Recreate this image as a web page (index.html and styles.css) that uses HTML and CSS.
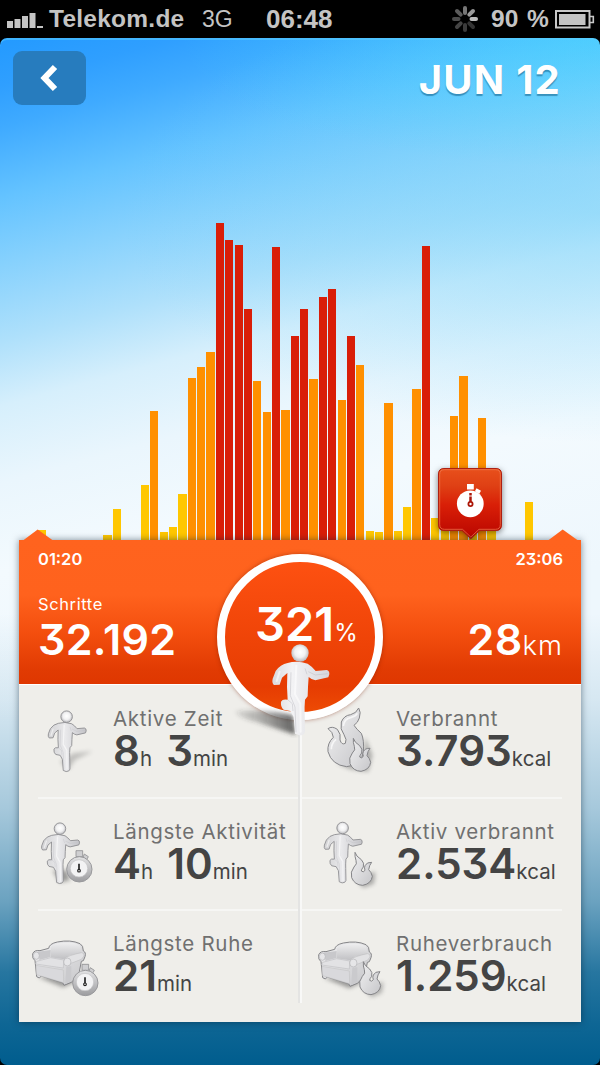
FILE: index.html
```
<!DOCTYPE html>
<html lang="de">
<head>
<meta charset="utf-8">
<title>Jun 12</title>
<link rel="stylesheet" href="styles.css">
</head>
<body>
<svg class="defs" width="0" height="0" aria-hidden="true">
  <defs>
    <linearGradient id="metal" x1="0" y1="0" x2="1" y2="1"><stop offset="0" stop-color="#f1f1f2"/><stop offset=".5" stop-color="#dcdcde"/><stop offset="1" stop-color="#c6c6c9"/></linearGradient>
    <linearGradient id="white3d" x1="0" y1="0" x2="1" y2="0"><stop offset="0" stop-color="#d9d9dd"/><stop offset=".35" stop-color="#f3f3f5"/><stop offset=".6" stop-color="#e8e8eb"/><stop offset="1" stop-color="#d6d6dc"/></linearGradient>
    <linearGradient id="body3d" x1="0" y1="0" x2="1" y2="0"><stop offset="0" stop-color="#d2d2d4"/><stop offset=".45" stop-color="#e9e9eb"/><stop offset="1" stop-color="#c4c4c8"/></linearGradient>
    <linearGradient id="cast" x1="0" y1="0" x2="1" y2="0"><stop offset="0" stop-color="#333" stop-opacity=".12"/><stop offset=".5" stop-color="#333" stop-opacity=".4"/><stop offset="1" stop-color="#333" stop-opacity=".75"/></linearGradient>
    <radialGradient id="ball" cx=".5" cy=".45" r=".55"><stop offset="0" stop-color="#fff"/><stop offset=".55" stop-color="#f1f1f2"/><stop offset="1" stop-color="#b9b9bd"/></radialGradient>
    <linearGradient id="rim" x1="0" y1="0" x2="0" y2="1"><stop offset="0" stop-color="#e4e4e5"/><stop offset="1" stop-color="#9c9c9f"/></linearGradient>
    <linearGradient id="cushion" x1="0" y1="0" x2="0" y2="1"><stop offset="0" stop-color="#efeff0"/><stop offset="1" stop-color="#c0c0c3"/></linearGradient>
    <filter id="soft" x="-50%" y="-50%" width="200%" height="200%"><feGaussianBlur stdDeviation="6"/></filter>
    <symbol id="runner" viewBox="205 305 190 288" overflow="visible">
      <path d="M262 368Q290 359 322 370Q335 378 346 392L379 389Q388 391 387 402L384 411L345 420Q335 419 325 410L323 440L322 468L314 478Q312 500 313 520L314 574Q312 585 297 585L284 580L280 530L270 512L250 508Q240 500 242 484Q246 475 262 478L260 440L261 398L245 412L238 433L221 434Q214 428 217 415L226 392Q240 372 262 368Z"/>
      <path d="M272 396L270 466L284 500L287 576M314 384L320 402M262 478L276 490L278 512M324 394L345 404L382 400" fill="none" stroke="#bcbcc2" stroke-width="2.5" opacity=".6"/>
      <path d="M288 376L284 462L300 490L301 574M238 394L229 422" fill="none" stroke="#fff" stroke-width="6" opacity=".55" stroke-linecap="round"/>
      <circle cx="299" cy="338" r="26" fill="url(#ball)"/>
    </symbol>
    <symbol id="watch" viewBox="136 476 86 102" overflow="visible">
      <path d="M168 481h20v18h-20zM193 491l12 8-5 9-11-7z" fill="#cfcfd1" stroke="#8f8f92" stroke-width="2.5"/>
      <circle cx="178" cy="537" r="38" fill="url(#rim)" stroke="#99999c" stroke-width="3"/>
      <circle cx="177" cy="534" r="26" fill="#f3f3f4" stroke="#c4c4c6" stroke-width="2"/>
      <path d="M177 520v18" stroke="#222" stroke-width="5"/><circle cx="177" cy="541" r="4" fill="#fff" stroke="#222" stroke-width="3.5"/>
    </symbol>
    <symbol id="flame" viewBox="150 484 70 104" overflow="visible">
      <path d="M165 486Q164 500 168 510Q173 521 162 530Q150 545 155 562Q164 584 188 585Q214 580 217 558Q214 545 206 538Q208 524 215 516Q200 515 195 526Q192 532 195 540Q190 548 184 542Q184 537 190 530Q194 518 184 508Q168 498 165 486Z" fill="url(#metal)" stroke="#858588" stroke-width="3" stroke-linejoin="round"/>
    </symbol>
    <symbol id="sofa" viewBox="94 116 166 146" overflow="visible">
      <path d="M112 230L190 262L236 240L214 226Z" fill="#555" opacity=".55" filter="url(#soft)"/>
      <path d="M98 162Q102 149 120 152L146 145Q148 131 172 126Q212 118 240 131Q250 136 250 153Q259 157 255 170L250 182L244 184L236 226L214 247L192 256L188 248L124 228L118 234L110 230L105 182Q96 176 98 162Z" fill="url(#metal)" stroke="#858588" stroke-width="3" stroke-linejoin="round"/>
      <path d="M152 172L153 142Q162 129 184 129Q218 124 238 134Q246 144 243 158L206 167L192 178Z" fill="url(#cushion)"/>
      <path d="M110 184L152 173L191 180L190 204L107 192Z" fill="#e2e2e4" stroke="#c1c1c4" stroke-width="2"/>
      <path d="M108 196L190 210L191 248L110 224Z" fill="#d9d9dc" stroke="#c0c0c0" stroke-width="1.5"/>
      <path d="M102 158Q112 152 124 154L152 150L151 171L118 180Q119 164 102 158Z" fill="#c8c8cb"/>
      <path d="M192 176Q206 166 244 158Q254 158 252 168L244 178L213 190Z" fill="#e2e2e4" stroke="#b8b8bb" stroke-width="1.5"/>
      <ellipse cx="109" cy="167" rx="9" ry="11" fill="#e6e6e8" stroke="#b4b4b7" stroke-width="2"/>
      <ellipse cx="202" cy="186" rx="11" ry="12" fill="#e6e6e8" stroke="#b4b4b7" stroke-width="2"/>
      <path d="M199 201L214 198L214 243L196 252Z" fill="#cacacd"/>
    </symbol>
  </defs>
</svg>

<header class="status">
  <svg class="signal" width="36" height="18" viewBox="0 0 36 18"><path d="M0 11h6v7H0zM7.500 9h6v9h-6zM15 6h6v12h-6zM22.500 3h6v15h-6zM30 16h6v2h-6z" fill="#c4c4c4"/></svg>
  <span class="carrier">Telekom.de</span>
  <span class="network">3G</span>
  <span class="clock">06:48</span>
  <svg class="spinner" width="28" height="28" viewBox="-14 -14 28 28" stroke-width="4" stroke-linecap="round">
    <path d="M0-6V-11" stroke="#777"/><path d="M4.300-4.300L8-8" stroke="#999"/><path d="M6.500 0H11" stroke="#bbb"/><path d="M4.300 4.300L8 8" stroke="#333"/><path d="M0 6V11" stroke="#3c3c3c"/><path d="M-4.300 4.300L-8 8" stroke="#444"/><path d="M-6.500 0H-11" stroke="#4c4c4c"/><path d="M-4.300-4.300L-8-8" stroke="#5c5c5c"/>
  </svg>
  <span class="percent">90 %</span>
  <svg class="battery" width="40" height="19" viewBox="0 0 40 19"><rect x="1" y="1" width="33.500" height="16.500" fill="none" stroke="#c8c8c8" stroke-width="2"/><rect x="4" y="4" width="26.500" height="11" fill="#c4c4c4"/><path d="M35 6.500h3.300v6H35" fill="none" stroke="#c8c8c8" stroke-width="1.600"/></svg>
</header>

<main class="screen">
  <div class="topbar">
    <button class="back" aria-label="Zurück"><svg width="20" height="28" viewBox="0 0 20 28"><path d="M15 3L4.500 14L15 25" fill="none" stroke="#fff" stroke-width="6"/></svg></button>
    <h1 class="date">JUN 12</h1>
  </div>

  <section class="chart">
    <i class="bar none"></i><i class="bar none"></i><i class="bar low" style="height:10px"></i><i class="bar none"></i><i class="bar none"></i><i class="bar none"></i><i class="bar none"></i><i class="bar none"></i><i class="bar none"></i><i class="bar low" style="height:5px"></i>
    <i class="bar low" style="height:31px"></i><i class="bar none"></i><i class="bar none"></i><i class="bar low" style="height:55.500px"></i><i class="bar mid" style="height:128.700px"></i><i class="bar low" style="height:7.700px"></i><i class="bar low" style="height:13px"></i><i class="bar low" style="height:46px"></i><i class="bar mid" style="height:162px"></i><i class="bar mid" style="height:172.700px"></i>
    <i class="bar mid" style="height:187.700px"></i><i class="bar high" style="height:317px"></i><i class="bar high" style="height:300px"></i><i class="bar high" style="height:294.700px"></i><i class="bar high" style="height:230.700px"></i><i class="bar mid" style="height:158.700px"></i><i class="bar mid" style="height:127.700px"></i><i class="bar high" style="height:292.700px"></i><i class="bar mid" style="height:129.700px"></i><i class="bar high" style="height:203.700px"></i>
    <i class="bar high" style="height:230.700px"></i><i class="bar mid" style="height:160.700px"></i><i class="bar high" style="height:242.700px"></i><i class="bar high" style="height:251.300px"></i><i class="bar mid" style="height:139.700px"></i><i class="bar high" style="height:203.700px"></i><i class="bar mid" style="height:174.700px"></i><i class="bar low" style="height:9.300px"></i><i class="bar low" style="height:7.700px"></i><i class="bar mid" style="height:137px"></i>
    <i class="bar low" style="height:9.300px"></i><i class="bar low" style="height:33px"></i><i class="bar mid" style="height:151px"></i><i class="bar high" style="height:293.700px"></i><i class="bar low" style="height:22px"></i><i class="bar low" style="height:22px"></i><i class="bar mid" style="height:124px"></i><i class="bar mid" style="height:164.300px"></i><i class="bar low" style="height:22px"></i><i class="bar mid" style="height:122px"></i>
    <i class="bar low" style="height:22px"></i><i class="bar none"></i><i class="bar none"></i><i class="bar none"></i><i class="bar low" style="height:37.700px"></i><i class="bar none"></i><i class="bar none"></i><i class="bar none"></i><i class="bar none"></i><i class="bar none"></i>
    <svg class="marker" width="74" height="82" viewBox="-5 -5 74 82">
      <defs><linearGradient id="red" x1="0" y1="0" x2="0" y2="1"><stop offset="0" stop-color="#e8501c"/><stop offset=".25" stop-color="#df4014"/><stop offset=".52" stop-color="#d91f07"/><stop offset="1" stop-color="#b80500"/></linearGradient></defs>
      <path d="M6 .5H58Q63.500 .5 63.500 6V57Q63.500 62.500 58 62.500H41.500L32.800 70.800L24 62.500H6Q.5 62.500 .5 57V6Q.5 .5 6 .5Z" fill="url(#red)" stroke="#ae2012"/>
      <path d="M6.500 1.700H57.500Q62.300 1.700 62.300 6.500V56.500Q62.300 61.300 57.500 61.300H41L32.800 69L24.500 61.300H6.500Q1.700 61.300 1.700 56.500V6.500Q1.700 1.700 6.500 1.700Z" fill="none" stroke="#f07a50" opacity=".7"/>
      <path d="M29 16h6.800v5.500H29zM38.500 20.300l4.500 2.500-1.800 3.200-4.300-2.700z" fill="#fff"/>
      <circle cx="32.300" cy="35.800" r="13.400" fill="#fff"/><path d="M32.500 25v2.500M32.500 28.500v6" stroke="#ad1708" stroke-width="2.500"/><circle cx="32.500" cy="36" r="2.100" fill="#fff" stroke="#ad1708" stroke-width="1.800"/>
    </svg>
  </section>

  <section class="card">
    <svg class="notch start" width="30" height="12" viewBox="0 0 30 12"><path d="M0 11.500L14.700 .5L30 11.500Z" fill="#ff631e"/></svg>
    <svg class="notch end" width="30" height="12" viewBox="0 0 30 12"><path d="M0 11.500L14.700 .5L30 11.500Z" fill="#ff631e"/></svg>
    <div class="summary">
      <div class="times"><span>01:20</span><span>23:06</span></div>
      <div class="caption">Schritte</div>
      <div class="totals"><span class="steps">32.192</span><span class="distance">28<small>km</small></span></div>
      <div class="goal"><span class="goal-text">321<small>%</small></span></div>
      <svg class="goal-runner" width="106" height="96" viewBox="80 305 318 288">
        <path d="M286 583L250 572Q200 556 170 545Q120 535 104 514Q150 506 245 518L278 525Z" fill="url(#cast)" filter="url(#soft)"/>
        <use href="#runner" x="205" y="305" width="190" height="288" fill="url(#white3d)"/>
      </svg>
    </div>

    <div class="stats">
      <div class="stat">
        <svg class="icon" width="94" height="113" viewBox="-3 -18 282 339">
          <path d="M120 215L145 240L165 210L218 184L160 190Z" fill="#555" opacity=".3" filter="url(#soft)"/>
          <use href="#runner" x="77" y="58" width="127" height="192" fill="url(#body3d)" stroke="#8d8d90" stroke-width="4"/>
        </svg>
        <div class="text"><div class="label">Aktive Zeit</div><div class="value"><b>8</b><small>h</small><b class="second">3</b><small>min</small></div></div>
      </div>
      <div class="stat right">
        <svg class="icon" width="96" height="113" viewBox="3 -18 288 339">
          <path d="M110 220L150 238L205 246L218 195L195 140L190 210Z" fill="#555" opacity=".4" filter="url(#soft)"/>
          <path d="M176 54Q184 66 178 84Q174 98 162 106Q170 118 184 130Q193 150 190 185Q186 226 140 230Q95 225 84 185Q81 160 100 142Q99 126 84 116Q96 107 112 118Q124 132 120 150Q125 166 136 160Q142 150 132 134Q119 118 124 96Q132 76 152 74Q169 70 176 54Z" fill="url(#metal)" stroke="#858588" stroke-width="3" stroke-linejoin="round"/>
          <path d="M130 108Q132 86 154 82Q166 80 172 70M94 178Q94 160 108 148" fill="none" stroke="#fff" stroke-width="5" opacity=".7"/>
          <use href="#flame" x="145" y="143" width="70" height="104"/>
        </svg>
        <div class="text"><div class="label">Verbrannt</div><div class="value"><b>3.793</b><small>kcal</small></div></div>
      </div>
      <div class="stat">
        <svg class="icon" width="94" height="113" viewBox="-3 320 282 339">
          <path d="M98 540L120 576L150 570L140 540Z" fill="#333" opacity=".45" filter="url(#soft)"/>
          <use href="#runner" x="57" y="393" width="127" height="192" fill="url(#body3d)" stroke="#8d8d90" stroke-width="4"/>
          <use href="#watch" x="136" y="476" width="86" height="102"/>
        </svg>
        <div class="text"><div class="label">Längste Aktivität</div><div class="value"><b>4</b><small>h</small><b class="second">10</b><small>min</small></div></div>
      </div>
      <div class="stat right">
        <svg class="icon" width="96" height="113" viewBox="3 320 288 339">
          <path d="M160 560L190 592L222 580L226 545Z" fill="#555" opacity=".45" filter="url(#soft)"/>
          <use href="#runner" x="65" y="391" width="127" height="192" fill="url(#body3d)" stroke="#8d8d90" stroke-width="4"/>
          <use href="#flame" x="150" y="484" width="70" height="104"/>
        </svg>
        <div class="text"><div class="label">Aktiv verbrannt</div><div class="value"><b>2.534</b><small>kcal</small></div></div>
      </div>
      <div class="stat">
        <svg class="icon" width="94" height="113" viewBox="57 27 282 339">
          <use href="#sofa" x="94" y="116" width="166" height="146"/>
          <use href="#watch" x="214" y="188" width="86" height="102"/>
        </svg>
        <div class="text"><div class="label">Längste Ruhe</div><div class="value"><b>21</b><small>min</small></div></div>
      </div>
      <div class="stat right">
        <svg class="icon" width="96" height="113" viewBox="3 27 288 339">
          <path d="M185 262L215 292L246 278L250 246Z" fill="#555" opacity=".4" filter="url(#soft)"/>
          <use href="#sofa" x="52" y="119" width="166" height="146"/>
          <use href="#flame" x="175" y="183" width="70" height="104"/>
        </svg>
        <div class="text"><div class="label">Ruheverbrauch</div><div class="value"><b>1.259</b><small>kcal</small></div></div>
      </div>
    </div>
  </section>
</main>
</body>
</html>
```
FILE: styles.css
```
* { box-sizing: border-box; }
body { margin: 0; width: 600px; height: 1065px; background: #000; overflow: hidden; font-family: Inter, "Liberation Sans", sans-serif; font-feature-settings: "cv09"; display: flex; flex-direction: column; }
.defs { position: absolute; }
small { font-size: inherit; }
b { font-weight: 600; }

.status { height: 38px; flex: none; display: flex; align-items: center; color: #c4c4c4; font: bold 24.500px/36px "Liberation Sans", sans-serif; white-space: nowrap; }
.signal { margin: 0 0 1px 7px; flex: none; }
.carrier { width: 153px; padding-left: 6px; letter-spacing: .25px; }
.network { width: 70px; padding-left: 6px; font-weight: normal; font-size: 23px; }
.clock { width: 185px; font-size: 26px; }
.spinner { flex: none; margin-right: 12px; }
.percent { width: 64px; word-spacing: 2px; flex: none; }
.battery { flex: none; }

.screen {
  width: 600px; height: 1027px; border-radius: 7px; overflow: hidden; display: flex; flex-direction: column;
  background:
    linear-gradient(to bottom, rgba(0,93,142,0) 56%, rgba(0,93,142,.1) 64.500%, rgba(0,93,142,.3) 75%, rgba(0,93,142,.55) 84%, rgba(0,93,142,.84) 91%, rgba(0,93,142,.94) 96%, #005d8e 100%),
    radial-gradient(ellipse 420px 130px at 100% 0, rgba(50,215,255,.45), rgba(50,215,255,0)),
    radial-gradient(ellipse 480px 230px at 100% 17%, rgba(110,208,250,.5), rgba(110,208,250,.28) 45%, rgba(110,208,250,0)),
    linear-gradient(165deg, #239aff 0, #2f9fff 4%, #3faaff 7.500%, #64c3ff 13.500%, #86d1fd 19%, #aee0fb 25.500%, #d6effc 31%, #eaf6fd 37.500%, #f3fafe 45%, #eef7fd 58%);
  box-shadow: inset 0 2px 0 rgba(90,205,255,.5);
}
.topbar { height: 82px; flex: none; display: flex; justify-content: space-between; padding: 13px 39px 0 13px; }
.back { width: 73px; height: 54px; border: 0; border-radius: 9px; background: #277cbe; padding: 0; display: flex; align-items: center; justify-content: center; }
.date { margin: 5px 0 0; font-size: 40px; line-height: 48px; font-weight: 700; letter-spacing: 1.200px; color: #fff; text-shadow: 0 2px 1px rgba(0,70,110,.45); }

.chart { position: relative; height: 420px; flex: none; margin: 0 19px; display: grid; grid-template-columns: repeat(60, 1fr); align-items: end; }
.bar { display: block; width: 8.200px; margin-left: .1px; }
.low { background: #ffc700; }
.mid { background: #ff9000; }
.high { background: #d91e08; }
.marker { position: absolute; left: 414px; top: 343px; filter: drop-shadow(0 2px 3px rgba(0,0,0,.5)); }

.card { position: relative; width: 562px; height: 482px; margin: 0 19px; flex: none; background: #efeeea; box-shadow: 0 0 7px rgba(0,25,45,.5); }
.notch { position: absolute; top: -11px; }
.start { left: 4px; }
.end { right: 3px; }
.summary { position: relative; z-index: 1; height: 144px; padding: 10px 19px 0; color: #fff; background: linear-gradient(to bottom, #ff631e 0, #ff621d 38%, #f34e0e 65%, #e13b03 90%, #df3700 100%); box-shadow: 0 1px 0 #fff; }
.times { display: flex; justify-content: space-between; font-size: 16.500px; line-height: 18px; font-weight: 600; margin-right: -1px; }
.caption { font-size: 16.500px; line-height: 20px; margin-top: 26px; letter-spacing: .6px; }
.totals { display: flex; justify-content: space-between; font-size: 43px; line-height: 50px; font-weight: 600; letter-spacing: .3px; }
.totals small { font-size: 27.500px; font-weight: 300; letter-spacing: 1px; margin-right: -1px; }
.goal { position: absolute; left: 198px; top: 14px; width: 166px; height: 166px; border: 8.500px solid #fff; border-radius: 50%; background: radial-gradient(circle at 50% 45%, rgba(255,90,20,0) 68%, rgba(255,90,20,.65) 72%), linear-gradient(#ff5212, #e63c02 80%, #f05005); background-origin: border-box; box-shadow: 0 0 4px rgba(120,30,0,.5); }
.goal-text { display: block; margin: 34px 0 0 30px; font-size: 47px; line-height: 56px; font-weight: 600; white-space: nowrap; }
.goal-text small { font-size: 24px; font-weight: 400; }
.goal-runner { position: absolute; left: 208px; top: 102px; }

.stats { display: grid; grid-template-columns: 282px 280px; grid-auto-rows: 112.600px; position: relative; }
.stats::after { content: ""; position: absolute; left: 279px; top: 0; width: 4px; height: 319px; background: linear-gradient(to right, #e4e4e3 50%, #f8f8f7 50%); }
.stat { display: flex; position: relative; }
.stat + .stat + .stat::before { content: ""; position: absolute; left: 19px; right: 0; top: 0; height: 2px; background: #f6f6f4; }
.stat.right + .stat + .right::before { left: 0; right: 19px; }
.icon { flex: none; }
.text { padding-top: 23px; white-space: nowrap; }
.right .text { margin-left: -1px; }
.label { font-size: 20.500px; line-height: 24px; color: #707070; letter-spacing: .7px; }
.value { display: flex; align-items: baseline; line-height: 40px; color: #444; }
.value b { font-size: 42px; }
.value small { font-size: 20.500px; letter-spacing: .1px; }
.second { margin-left: 14px; }
```
